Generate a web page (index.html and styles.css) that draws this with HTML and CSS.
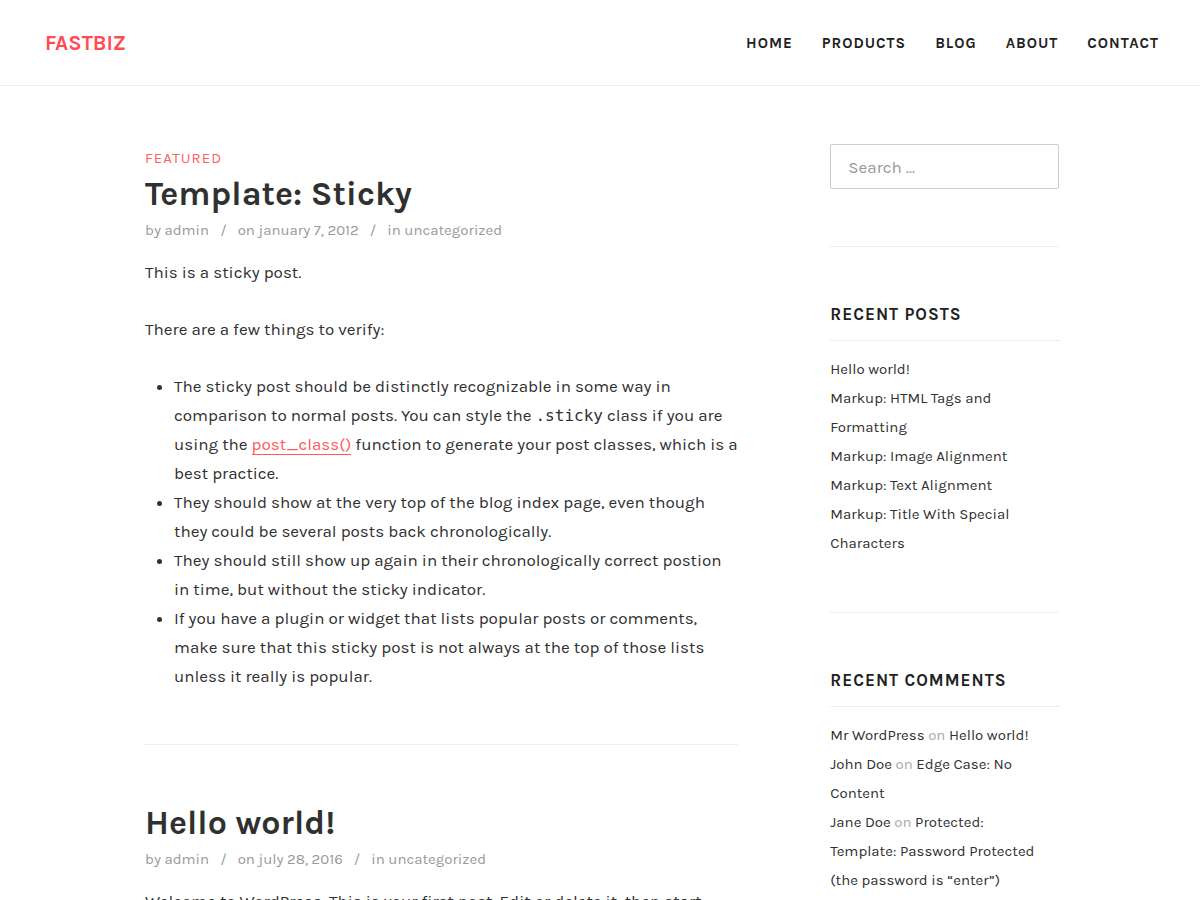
FILE: index.html
```html
<!DOCTYPE html>
<html lang="en">
<head>
<meta charset="utf-8">
<meta name="viewport" content="width=device-width, initial-scale=1">
<title>Fastbiz</title>
<link rel="stylesheet" href="styles.css">
</head>
<body>
<header class="site-header">
  <a class="site-title" href="#">FASTBIZ</a>
  <nav class="main-nav" aria-label="Primary">
    <a href="#">HOME</a>
    <a href="#">PRODUCTS</a>
    <a href="#">BLOG</a>
    <a href="#">ABOUT</a>
    <a href="#">CONTACT</a>
  </nav>
</header>
<div class="site-content">
  <main class="posts">
    <article class="post">
      <span class="featured">FEATURED</span>
      <h2 class="post-title"><a href="#">Template: Sticky</a></h2>
      <div class="post-meta"><span>by <a href="#">admin</a></span><span>on <a href="#">january 7, 2012</a></span><span>in <a href="#">uncategorized</a></span></div>
      <div class="post-body">
        <p>This is a sticky post.</p>
        <p>There are a few things to verify:</p>
        <ul>
          <li>The sticky post should be distinctly recognizable in some way in comparison to normal posts. You can style the <code>.sticky</code> class if you are using the <a href="#">post_class()</a> function to generate your post classes, which is a best practice.</li>
          <li>They should show at the very top of the blog index page, even though they could be several posts back chronologically.</li>
          <li>They should still show up again in their chronologically correct postion in time, but without the sticky indicator.</li>
          <li>If you have a plugin or widget that lists popular posts or comments, make sure that this sticky post is not always at the top of those lists unless it really is popular.</li>
        </ul>
      </div>
    </article>
    <article class="post">
      <h2 class="post-title"><a href="#">Hello world!</a></h2>
      <div class="post-meta"><span>by <a href="#">admin</a></span><span>on <a href="#">july 28, 2016</a></span><span>in <a href="#">uncategorized</a></span></div>
      <div class="post-body">
        <p>Welcome to WordPress. This is your first post. Edit or delete it, then start writing!</p>
      </div>
    </article>
  </main>
  <aside class="sidebar">
    <section class="widget">
      <form class="search" role="search">
        <input class="search-field" type="search" placeholder="Search …" aria-label="Search">
      </form>
    </section>
    <section class="widget">
      <h3 class="widget-title">RECENT POSTS</h3>
      <ul class="widget-list">
        <li><a href="#">Hello world!</a></li>
        <li><a href="#">Markup: HTML Tags and Formatting</a></li>
        <li><a href="#">Markup: Image Alignment</a></li>
        <li><a href="#">Markup: Text Alignment</a></li>
        <li><a href="#">Markup: Title With Special Characters</a></li>
      </ul>
    </section>
    <section class="widget">
      <h3 class="widget-title">RECENT COMMENTS</h3>
      <ul class="widget-list">
        <li><a href="#">Mr WordPress</a> on <a href="#">Hello world!</a></li>
        <li><a href="#">John Doe</a> on <a href="#">Edge Case: No Content</a></li>
        <li><a href="#">Jane Doe</a> on <a href="#">Protected: Template: Password Protected (the password is “enter”)</a></li>
      </ul>
    </section>
  </aside>
</div>
</body>
</html>
```
FILE: styles.css
```css
* { box-sizing: border-box; }

body {
  margin: 0;
  background: #fff;
  color: #303030;
  font: 17px/29px Karla, Inter, sans-serif;
}

a { color: inherit; text-decoration: none; }

.site-header {
  display: flex;
  align-items: center;
  justify-content: space-between;
  padding: 29px 41px 27px 45px;
  border-bottom: 1px solid #eee;
}

.site-title {
  color: #ff4c54;
  font-size: 21px;
  font-weight: 700;
}

.main-nav {
  display: flex;
  gap: 29px;
  color: #222;
  font-size: 15px;
  font-weight: 700;
  letter-spacing: 1px;
}

.site-content {
  display: grid;
  grid-template-columns: 594fr 229fr;
  column-gap: 92px;
  padding: 58px 141px 57px 145px;
}

.post + .post {
  margin-top: 53px;
  padding-top: 57px;
  border-top: 1px solid #eee;
}

.featured {
  display: block;
  color: #ff6067;
  font-size: 15px;
  letter-spacing: 1px;
}

.post-title {
  margin: 0;
  font-size: 34px;
  line-height: 43px;
  font-weight: 700;
}

.post-meta {
  display: flex;
  color: #999;
  font-size: 15px;
}

.post-meta span + span::before {
  content: "/";
  margin: 0 11px;
}

.post-body { margin-top: 13px; }

.post-body p { margin: 0 0 28px; }

.post-body ul { margin: 0; padding-left: 29px; }

.post-body a {
  color: #ff5860;
  border-bottom: 1px solid #ff5860;
}

.post-body code { font: 16px "DejaVu Sans Mono", monospace; }

.search { margin-bottom: 57px; }

.widget + .widget {
  padding-top: 53px;
  border-top: 1px solid #eee;
}

.search-field {
  display: block;
  width: 100%;
  height: 45px;
  padding: 0 17px;
  border: 1px solid #ccc;
  border-radius: 2px;
  background: #fff;
  color: #303030;
  font: inherit;
}

.search-field::placeholder { color: #999; }

.widget-title {
  margin: 0 0 14px;
  padding-bottom: 11px;
  border-bottom: 1px dotted #ddd;
  color: #222;
  font-size: 17px;
  font-weight: 700;
  letter-spacing: 1px;
}

.widget-list {
  margin: 0 0 54px;
  padding: 0 8px 0 0;
  list-style: none;
  color: #aaa;
  font-size: 15px;
}

.widget-list a { color: #303030; }
```
